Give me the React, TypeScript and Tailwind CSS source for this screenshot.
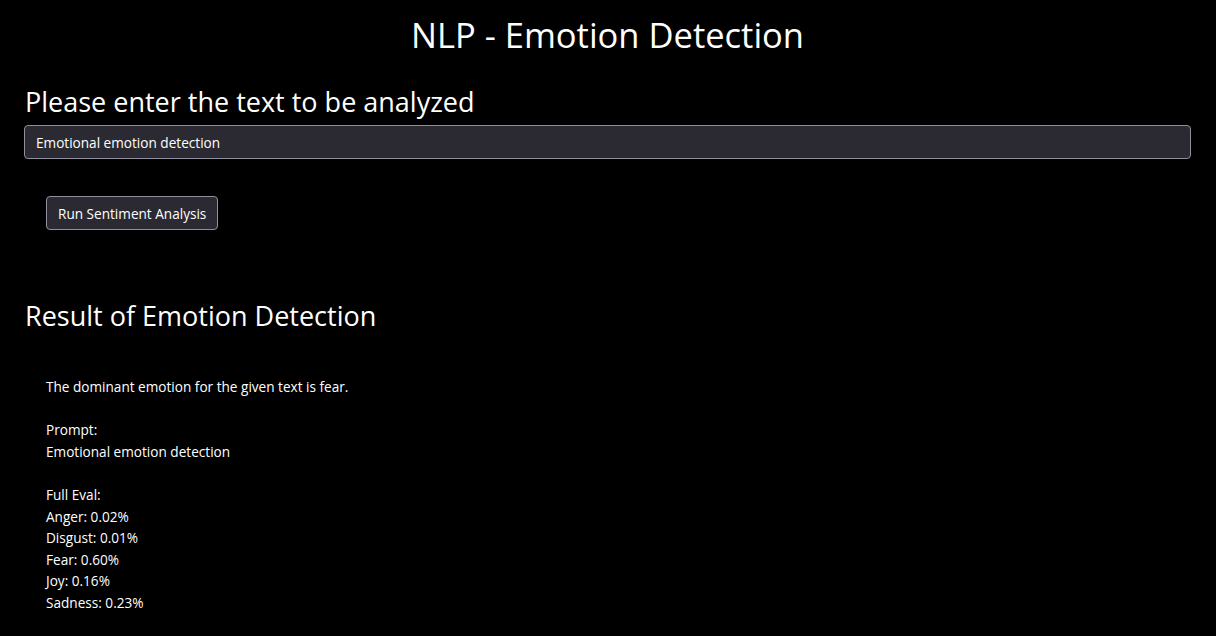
import React from "react";

export default function App() {
  const lines = [
    "Full Eval:",
    "Anger: 0.02%",
    "Disgust: 0.01%",
    "Fear: 0.60%",
    "Joy: 0.16%",
    "Sadness: 0.23%",
  ];
  return (
    <div className="min-h-[636px] w-full bg-black text-white font-['Open_Sans',sans-serif] pl-[24px] pr-[25px]">
      <h1 className="text-center text-[34.5px] leading-[42px] pt-[14px] font-normal">
        NLP - Emotion Detection
      </h1>
      <h2 className="mt-[29px] text-[27px] leading-[34px] pl-[1px] font-normal">
        Please enter the text to be analyzed
      </h2>
      <div className="mt-[6px] h-[34px] rounded-[4px] border border-[#8f8f9d] bg-[#2b2a33] flex items-center pl-[11px] pt-[3px] text-[13.6px]">
        Emotional emotion detection
      </div>
      <div className="pl-[22px] mt-[37px]">
        <button className="h-[34px] px-[11px] pt-[2px] rounded-[4px] border border-[#8f8f9d] bg-[#2b2a33] text-[13.6px] text-white">
          Run Sentiment Analysis
        </button>
      </div>
      <h2 className="mt-[69px] text-[27px] leading-[34px] pl-[1px] font-normal">
        Result of Emotion Detection
      </h2>
      <div className="pl-[22px] mt-[43px] text-[13.6px] leading-[21.6px]">
        <div>The dominant emotion for the given text is fear.</div>
        <div className="h-[21.6px]" />
        <div>Prompt:</div>
        <div>Emotional emotion detection</div>
        <div className="h-[21.6px]" />
        {lines.map((l) => (
          <div key={l}>{l}</div>
        ))}
      </div>
    </div>
  );
}
